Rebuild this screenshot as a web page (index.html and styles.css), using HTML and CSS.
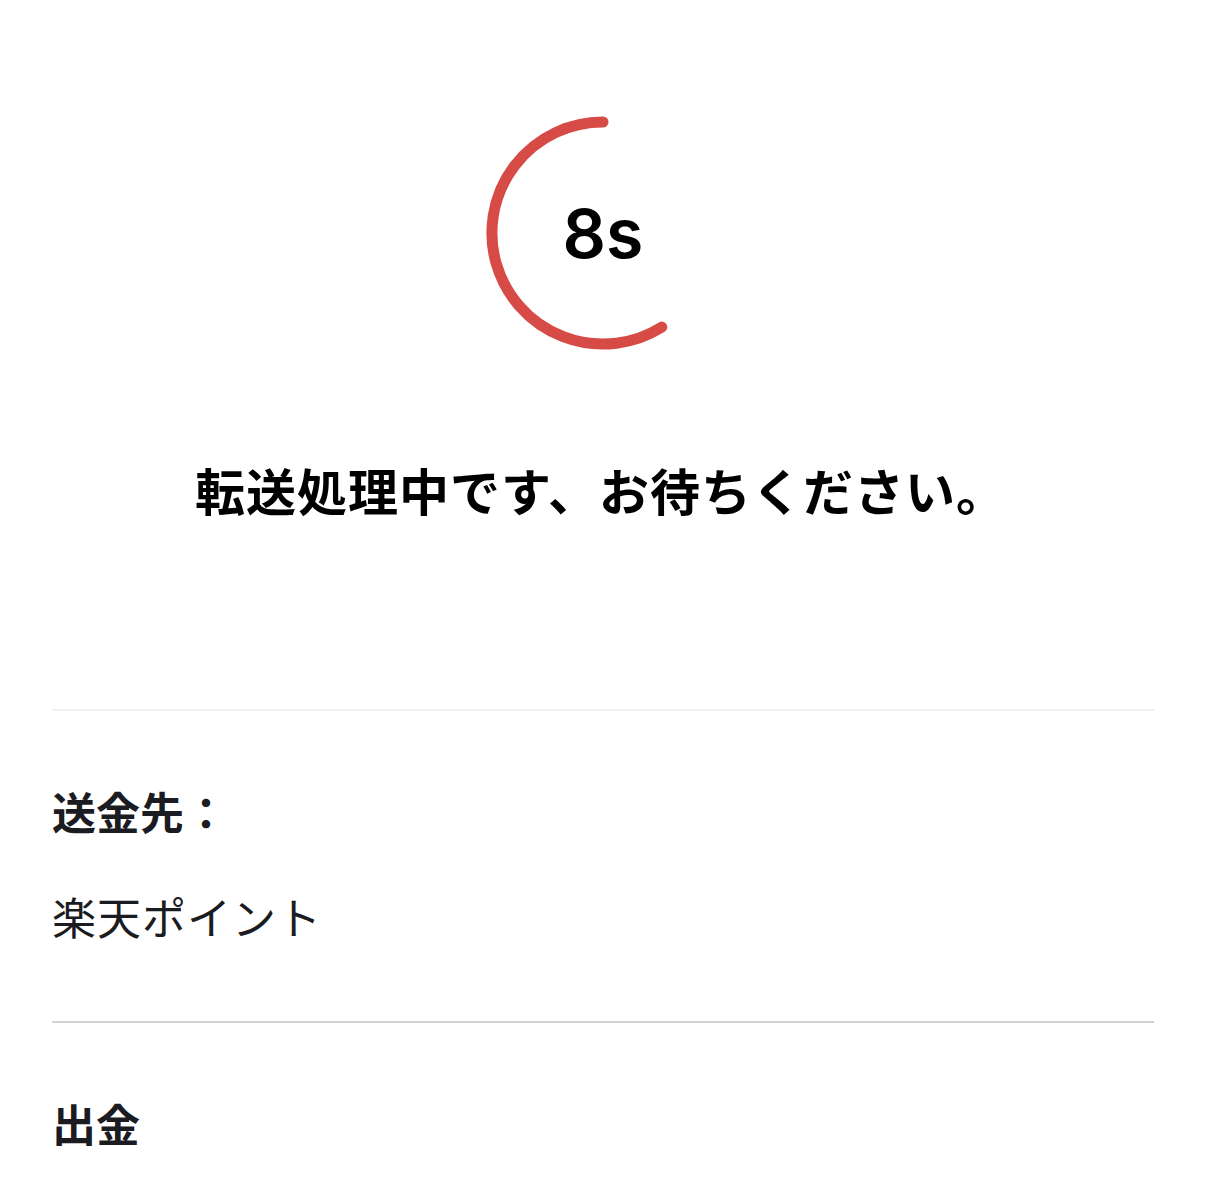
FILE: index.html
```html
<!DOCTYPE html>
<html lang="ja">

<head>
    <meta charset="UTF-8" />
    <title>転送処理中</title>
    <link rel="stylesheet" href="styles.css">
</head>

<body>
    <div class="timer">
        <svg class="ring" width="240" height="240" viewBox="0 0 240 240">
            <!-- arc from 12 o'clock, counter-clockwise, ~212deg -->
            <path d="M120 9 A111 111 0 1 0 178.8 214.1" fill="none" stroke="#d64b45" stroke-width="11"
                stroke-linecap="round" />
        </svg>
        <div class="count" id="count">8s</div>
    </div>

    <h1 class="message">転送処理中です、お待ちください。</h1>

    <div class="details">
        <div class="section">
            <div class="label">送金先：</div>
            <div class="value">楽天ポイント</div>
        </div>
        <div class="section strong-line">
            <div class="label">出金</div>
        </div>
    </div>
</body>

</html>
```

FILE: styles.css
```css
body {
    margin: 0;
    background-color: #fff;
    color: #1b1b22;
    font-family: "Noto Sans CJK JP", "Noto Sans", sans-serif;
}

.timer {
    position: relative;
    width: 240px;
    height: 240px;
    margin: 113px auto 0;
}

.ring {
    display: block;
}

.count {
    position: absolute;
    inset: 0;
    display: flex;
    align-items: center;
    justify-content: center;
    font-family: Inter, "Noto Sans", sans-serif;
    font-size: 68px;
    font-weight: 600;
    color: #000;
}

.message {
    margin: 106px 0 0;
    padding: 0 4px 3px 0;
    text-align: center;
    font-size: 50px;
    line-height: 60px;
    font-weight: 700;
    letter-spacing: 1px;
    color: #000;
}

.details {
    margin: 187px 52px 0;
}

.section {
    border-top: 2px solid #f0f0f0;
    padding: 70px 0 75px;
    display: flex;
    flex-direction: column;
    gap: 45px;
}

.section.strong-line {
    border-top-color: #d2d2d4;
}

.label {
    font-size: 44px;
    line-height: 60px;
    font-weight: 700;
}

.value {
    font-size: 44px;
    line-height: 60px;
    font-weight: 400;
    letter-spacing: 1px;
}
```
